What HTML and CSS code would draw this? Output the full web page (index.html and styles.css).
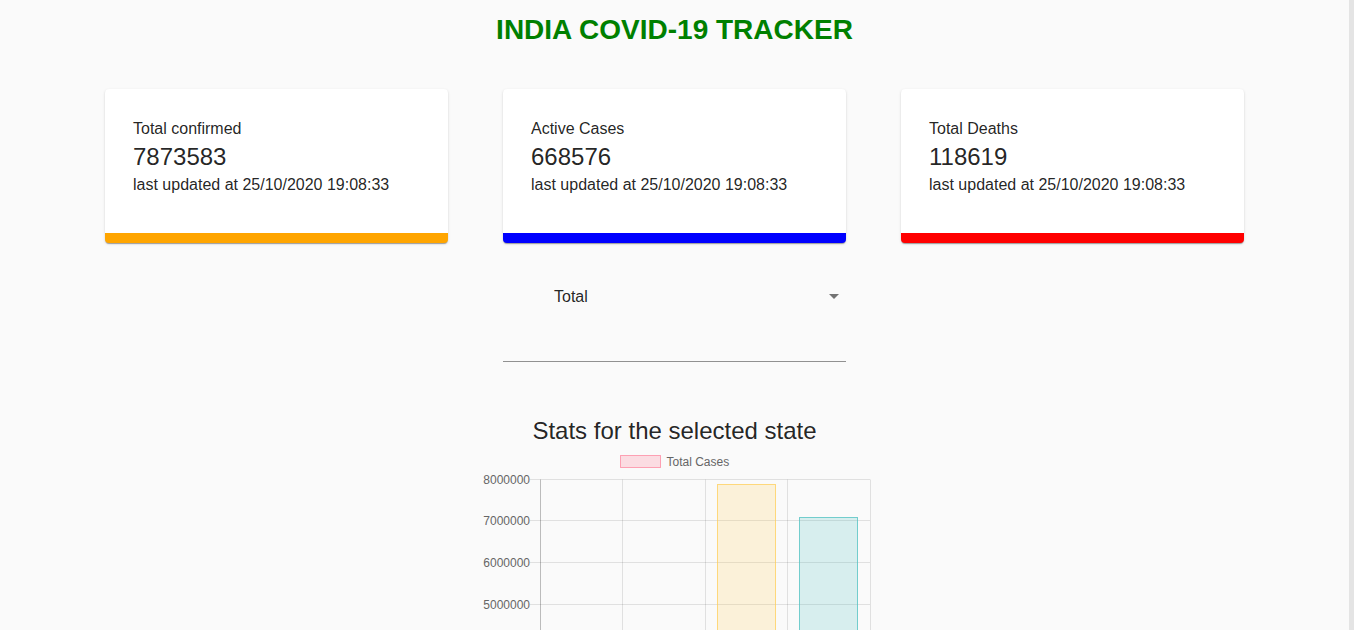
FILE: index.html
```html
<!DOCTYPE html>
<html lang="en">
<head>
<meta charset="utf-8">
<title>India Covid-19 Tracker</title>
<link rel="stylesheet" href="styles.css">
</head>
<body>
<h1 class="title">INDIA COVID-19 TRACKER</h1>

<div class="cards">
  <div class="card card-confirmed">
    <div class="card-label">Total confirmed</div>
    <div class="card-value">7873583</div>
    <div class="card-updated">last updated at 25/10/2020 19:08:33</div>
  </div>
  <div class="card card-active">
    <div class="card-label">Active Cases</div>
    <div class="card-value">668576</div>
    <div class="card-updated">last updated at 25/10/2020 19:08:33</div>
  </div>
  <div class="card card-deaths">
    <div class="card-label">Total Deaths</div>
    <div class="card-value">118619</div>
    <div class="card-updated">last updated at 25/10/2020 19:08:33</div>
  </div>
</div>

<div class="select-wrap">
  <div class="select">
    <span class="select-value">Total</span>
    <svg class="select-icon" viewBox="0 0 24 24" width="24" height="24"><path d="M7 10l5 5 5-5z"/></svg>
  </div>
</div>

<h2 class="chart-title">Stats for the selected state</h2>

<div class="chart">
  <svg class="chart-svg" width="420" height="345" viewBox="0 0 420 345">
    <!-- legend -->
    <rect x="155.5" y="5.5" width="40" height="12" fill="rgba(255,99,132,0.2)" stroke="rgba(255,99,132,0.55)"/>
    <text class="legend-text" x="201.5" y="15.5">Total Cases</text>

    <!-- horizontal grid lines + ticks -->
    <g class="grid">
      <line x1="65" y1="29.5" x2="405" y2="29.5"/>
      <line x1="65" y1="70.5" x2="405" y2="70.5"/>
      <line x1="65" y1="112.5" x2="405" y2="112.5"/>
      <line x1="65" y1="154.5" x2="405" y2="154.5"/>
      <line x1="65" y1="195.5" x2="405" y2="195.5"/>
      <line x1="65" y1="237.5" x2="405" y2="237.5"/>
      <line x1="65" y1="279.5" x2="405" y2="279.5"/>
      <!-- vertical grid -->
      <line x1="157.5" y1="29.5" x2="157.5" y2="331"/>
      <line x1="240.5" y1="29.5" x2="240.5" y2="331"/>
      <line x1="322.5" y1="29.5" x2="322.5" y2="331"/>
      <line x1="405.5" y1="29.5" x2="405.5" y2="331"/>
    </g>
    <g class="axis">
      <line x1="75.5" y1="29.5" x2="75.5" y2="331"/>
      <line x1="65" y1="321.5" x2="405" y2="321.5"/>
    </g>

    <!-- y labels -->
    <g class="ylabels">
      <text x="65" y="33.5">8000000</text>
      <text x="65" y="74.5">7000000</text>
      <text x="65" y="116.5">6000000</text>
      <text x="65" y="158.5">5000000</text>
      <text x="65" y="199.5">4000000</text>
      <text x="65" y="241.5">3000000</text>
      <text x="65" y="283.5">2000000</text>
      <text x="65" y="325.5">1000000</text>
    </g>

    <!-- bars -->
    <rect x="87.5" y="293.5" width="58" height="28" fill="rgba(255,99,132,0.2)" stroke="rgba(255,99,132,0.6)"/>
    <rect x="169.5" y="316.5" width="58" height="5" fill="rgba(54,162,235,0.2)" stroke="rgba(54,162,235,0.6)"/>
    <rect x="252.5" y="34.5" width="58" height="287" fill="rgba(255,206,86,0.2)" stroke="rgba(255,206,86,0.75)"/>
    <rect x="334.5" y="67.5" width="58" height="254" fill="rgba(75,192,192,0.2)" stroke="rgba(75,192,192,0.75)"/>
  </svg>
</div>
</body>
</html>
```
FILE: styles.css
```css
html {
  background: #fafafa;
  border-right: 5px solid #e4e4e4;
}

body {
  margin: 0;
  background: #fafafa;
  font-family: "Liberation Sans", Arial, Helvetica, sans-serif;
  color: rgba(0, 0, 0, 0.87);
}

.title {
  margin: 14px 0 43px;
  font-size: 28px;
  line-height: 32px;
  font-weight: bold;
  color: #008000;
  text-align: center;
}

.cards {
  display: flex;
  justify-content: center;
  gap: 55px;
}

.card {
  width: 343px;
  box-sizing: border-box;
  background: #fff;
  border-radius: 4px;
  padding: 28px 28px 36px;
  border-bottom: 10px solid;
  box-shadow: 0 2px 1px -1px rgba(0,0,0,0.2), 0 1px 1px 0 rgba(0,0,0,0.14), 0 1px 3px 0 rgba(0,0,0,0.12);
}

.card-confirmed { border-bottom-color: #ffa500; }
.card-active { border-bottom-color: #0000ff; }
.card-deaths { border-bottom-color: #ff0000; }

.card-label {
  font-size: 16px;
  line-height: 24px;
}

.card-value {
  font-size: 24px;
  line-height: 32px;
}

.card-updated {
  font-size: 16px;
  line-height: 24px;
}

.select-wrap {
  width: 343px;
  margin: 42px auto 0;
}

.select {
  display: flex;
  align-items: flex-start;
  justify-content: space-between;
  padding: 0 0 52px 51px;
  border-bottom: 1px solid rgba(0, 0, 0, 0.42);
}

.select-value {
  font-size: 16px;
  line-height: 24px;
}

.select-icon {
  display: block;
  margin-top: -1px;
  fill: rgba(0, 0, 0, 0.54);
}

.chart-title {
  margin: 53px 0 3px;
  font-size: 24px;
  line-height: 32px;
  font-weight: normal;
  text-align: center;
}

.chart {
  display: flex;
  justify-content: center;
}

.chart-svg {
  display: block;
}

.legend-text {
  font-family: "Liberation Sans", Arial, sans-serif;
  font-size: 12px;
  fill: #666;
}

.grid line {
  stroke: rgba(0, 0, 0, 0.1);
  stroke-width: 1;
}

.axis line {
  stroke: rgba(0, 0, 0, 0.25);
  stroke-width: 1;
}

.ylabels text {
  font-family: "Liberation Sans", Arial, sans-serif;
  font-size: 12px;
  fill: #666;
  text-anchor: end;
}
```
